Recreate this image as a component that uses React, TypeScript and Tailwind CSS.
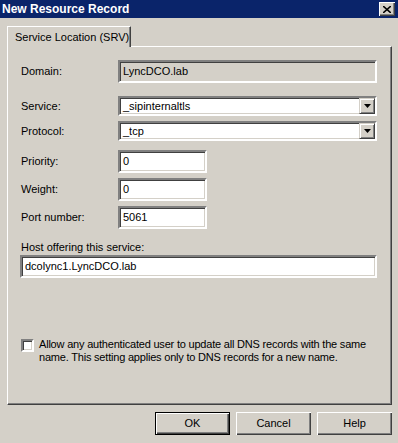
import React from 'react';

// Classic Windows sunken edit box
const sunken =
  'border-2 border-t-[#808080] border-l-[#808080] border-b-white border-r-white shadow-[inset_1px_1px_0_#404040,inset_-1px_-1px_0_#d4d0c8]';

function Field({ value, disabled, className }: { value: string; disabled?: boolean; className?: string }) {
  return (
    <div className={`${sunken} ${disabled ? 'bg-[#d4d0c8]' : 'bg-white'} flex items-center pl-[3px] ${className ?? ''}`}>
      {value}
    </div>
  );
}

function Combo({ value }: { value: string }) {
  return (
    <div className={`${sunken} bg-white flex items-center pl-[3px] h-[20px] w-[259px]`}>
      <span className="flex-1">{value}</span>
      <div className="w-[16px] h-[16px] bg-[#d4d0c8] flex items-center justify-center border border-t-[#d4d0c8] border-l-[#d4d0c8] border-b-[#404040] border-r-[#404040] shadow-[inset_1px_1px_0_white,inset_-1px_-1px_0_#808080]">
        <svg width="7" height="4" viewBox="0 0 7 4">
          <polygon points="0,0 7,0 3.5,4" fill="#000" />
        </svg>
      </div>
    </div>
  );
}

function Button({ label, isDefault }: { label: string; isDefault?: boolean }) {
  return (
    <div
      className={`w-[75px] h-[23px] flex items-center justify-center bg-[#d4d0c8] ${
        isDefault
          ? 'border border-black shadow-[inset_1px_1px_0_white,inset_-1px_-1px_0_#404040,inset_-2px_-2px_0_#808080]'
          : 'shadow-[inset_1px_1px_0_white,inset_-1px_-1px_0_#404040,inset_-2px_-2px_0_#808080]'
      }`}
    >
      {label}
    </div>
  );
}

export default function App() {
  return (
    <div
      className="w-[398px] h-[443px] bg-[#d4d0c8] text-[11px] text-black overflow-hidden flex flex-col"
      style={{ fontFamily: '"Liberation Sans", Arial, sans-serif' }}
    >
      {/* Title bar */}
      <div className="h-[18px] bg-[#0a246a] flex items-center justify-between pl-[2px] pr-[3px]">
        <span className="text-white font-bold text-[12px] leading-none">New Resource Record</span>
        <div className="w-[16px] h-[14px] bg-[#d4d0c8] flex items-center justify-center shadow-[inset_1px_1px_0_white,inset_-1px_-1px_0_#404040,inset_-2px_-2px_0_#808080]">
          <svg width="8" height="7" viewBox="0 0 8 7">
            <path d="M0 0 L8 7 M8 0 L0 7" stroke="#000" strokeWidth="1.6" />
          </svg>
        </div>
      </div>

      <div className="flex flex-col pl-[7px] pr-[6px] pt-[8px]">
        {/* Tab */}
        <div className="relative z-10 w-[124px] h-[21px] -mb-[1px] bg-[#d4d0c8] border-t border-l border-white border-r border-r-[#404040] shadow-[inset_-1px_0_0_#808080] flex items-center pl-[7px]">
          Service Location (SRV)
        </div>

        {/* Panel */}
        <div className="h-[359px] border-t border-l border-white border-r border-b border-r-[#404040] border-b-[#404040] shadow-[inset_-1px_-1px_0_#808080] flex flex-col pl-[13px] pr-[14px]">
          <div className="flex items-center mt-[13px]">
            <span className="w-[97px]">Domain:</span>
            <Field value="LyncDCO.lab" disabled className="h-[23px] w-[259px]" />
          </div>

          <div className="flex items-center mt-[13px]">
            <span className="w-[97px]">Service:</span>
            <Combo value="_sipinternaltls" />
          </div>
          <div className="flex items-center mt-[5px]">
            <span className="w-[97px]">Protocol:</span>
            <Combo value="_tcp" />
          </div>

          <div className="flex items-center mt-[9px]">
            <span className="w-[97px]">Priority:</span>
            <Field value="0" className="h-[23px] w-[89px]" />
          </div>
          <div className="flex items-center mt-[5px]">
            <span className="w-[97px]">Weight:</span>
            <Field value="0" className="h-[23px] w-[89px]" />
          </div>
          <div className="flex items-center mt-[5px]">
            <span className="w-[97px]">Port number:</span>
            <Field value="5061" className="h-[23px] w-[89px]" />
          </div>

          <div className="mt-[12px] leading-[13px]">Host offering this service:</div>
          <Field value="dcolync1.LyncDCO.lab" className="h-[23px] w-[357px] mt-[1px] -ml-[1px]" />

          <div className="flex items-start mt-[60px]">
            <div className={`${sunken} bg-white w-[13px] h-[13px] mt-[1px] shrink-0`} />
            <p className="ml-[5px] w-[350px] shrink-0 leading-[13px] tracking-[-0.2px]">
              Allow any authenticated user to update all DNS records with the same name. This setting applies only to DNS records for a new name.
            </p>
          </div>
        </div>

        {/* Buttons */}
        <div className="flex justify-end gap-[6px] mt-[7px]">
          <Button label="OK" isDefault />
          <Button label="Cancel" />
          <Button label="Help" />
        </div>
      </div>
    </div>
  );
}
